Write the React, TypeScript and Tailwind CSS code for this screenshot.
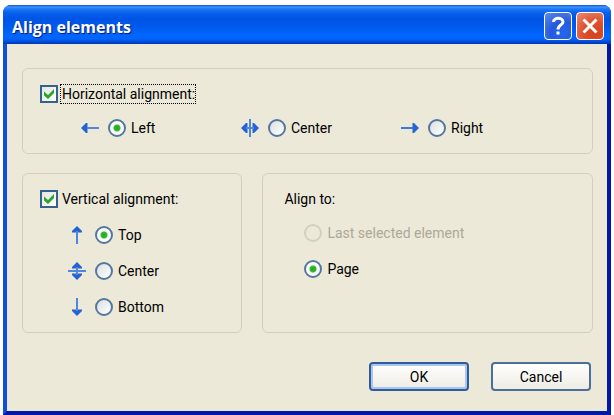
import type { ReactNode } from 'react';

type IconProps = {
  children: ReactNode;
};

const ArrowIcon = ({ children }: IconProps) => (
  <svg
    viewBox="0 0 18 18"
    className="size-[18px] shrink-0 fill-[#2463d4] stroke-none"
    aria-hidden="true"
  >
    {children}
  </svg>
);

const LeftIcon = () => (
  <ArrowIcon>
    <path d="M0 9 5 4 6.500 4 6.500 14 5 14Z" />
    <path d="M6 8h12v2H6z" fill="#4f86e0" />
  </ArrowIcon>
);

const RightIcon = () => (
  <ArrowIcon>
    <path d="M18 9 13 4 11.500 4 11.500 14 13 14Z" />
    <path d="M0 8h12v2H0z" fill="#3f78dc" />
  </ArrowIcon>
);

const HorizontalCenterIcon = () => (
  <ArrowIcon>
    <path d="M0 9 5 4 6.500 4 6.500 14 5 14ZM18 9 13 4 11.500 4 11.500 14 13 14Z" />
    <path d="M5 8h8v2H5zM8 0h2v18H8z" fill="#4f86e0" />
  </ArrowIcon>
);

const TopIcon = () => (
  <ArrowIcon>
    <path d="M9 0 14 5 14 6.500 4 6.500 4 5Z" />
    <path d="M8 5h2v13H8z" fill="#4f86e0" />
  </ArrowIcon>
);

const BottomIcon = () => (
  <ArrowIcon>
    <path d="M9 18 14 13 14 11.500 4 11.500 4 13Z" />
    <path d="M8 0h2v13H8z" fill="#4f86e0" />
  </ArrowIcon>
);

const VerticalCenterIcon = () => (
  <ArrowIcon>
    <path d="M9 0 14 5 14 6.500 4 6.500 4 5ZM9 18 14 13 14 11.500 4 11.500 4 13Z" />
    <path d="M8 5h2v8H8zM0 8h18v2H0z" fill="#4f86e0" />
  </ArrowIcon>
);

type RadioProps = {
  name: string;
  label: string;
  icon?: ReactNode;
  defaultChecked?: boolean;
  disabled?: boolean;
};

const Radio = ({ name, label, icon, defaultChecked, disabled }: RadioProps) => (
  <label className="flex h-[18px] items-center gap-[5px] whitespace-nowrap has-disabled:text-[#aca899]">
    {icon && <span className="mr-1">{icon}</span>}
    <input
      type="radio"
      name={name}
      defaultChecked={defaultChecked}
      disabled={disabled}
      className="size-[18px] shrink-0 appearance-none rounded-full border-2 border-[#54779f] bg-linear-to-br from-[#dcdfe2] to-white checked:bg-[radial-gradient(circle,#22a51f_0,#38b934_3px,#f4f6f4_4px,#ffffff_7px)] disabled:border-[#d3d0c1] disabled:bg-[#ece9d8] disabled:bg-none"
    />
    {label}
  </label>
);

type CheckboxProps = {
  label: string;
  focused?: boolean;
};

const Checkbox = ({ label, focused }: CheckboxProps) => (
  <label className="flex h-[18px] items-center gap-0.5 whitespace-nowrap">
    <span className="grid size-[18px] shrink-0">
      <input
        type="checkbox"
        defaultChecked
        className="peer size-[18px] appearance-none border-2 border-[#35618e] bg-linear-to-br from-[#e4e6e3] to-white [grid-area:1/1]"
      />
      <svg
        viewBox="0 0 18 18"
        className="pointer-events-none invisible size-[18px] fill-[#2ba52b] [grid-area:1/1] peer-checked:visible"
        aria-hidden="true"
      >
        <path d="M4 6.500 8 10 14 4V8L8 14 4 10.500Z" />
      </svg>
    </span>
    <span
      className={
        focused
          ? 'border border-dotted border-black pl-px leading-[18px]'
          : 'border border-transparent pl-px leading-[18px]'
      }
    >
      {label}
    </span>
  </label>
);

const groupClass = 'min-w-0 rounded-md border border-[#d0d0bf] px-[17px] py-4';

const App = () => {
  return (
    <main className="bg-white px-[3px] pt-[5px] pb-px font-['Roboto','Liberation_Sans',sans-serif] text-[14px] leading-[18px] text-black">
      <div
        role="dialog"
        aria-labelledby="dialog-title"
        className="overflow-hidden rounded-t-lg bg-[#0a3fdc]"
      >
        <header className="flex h-[39px] items-center justify-between bg-[linear-gradient(180deg,#0a52d8_0,#3d95ff_2px,#2079f8_4px,#0560ec_8px,#0054e3_14px,#0059ec_21px,#0066ff_30px,#0064fb_34px,#0048d0_37px,#0035b4_39px)] pr-[7px] pl-[9px]">
          <h1
            id="dialog-title"
            className="mt-1 font-['Open_Sans','Noto_Sans',sans-serif] text-[16px] leading-6 font-bold text-white [text-shadow:1px_1px_1px_#0a1883]"
          >
            Align elements
          </h1>
          <div className="mt-0.5 flex gap-1">
            <button
              type="button"
              aria-label="Help"
              className="flex size-7 items-center justify-center rounded border border-white bg-[radial-gradient(circle_at_70%_80%,#2468f0_0,#2559dd_45%,#5f8cec_100%)]"
            >
              <svg viewBox="0 0 26 26" className="size-[26px]" aria-hidden="true">
                <path
                  d="M8.500 9C8.500 4 18 4 18 9C18 12 13 12 13 16.500"
                  fill="none"
                  stroke="#fff"
                  strokeWidth="3"
                />
                <path d="M11.500 18.500h3v3h-3z" fill="#fff" />
              </svg>
            </button>
            <button
              type="button"
              aria-label="Close"
              className="flex size-7 items-center justify-center rounded border border-white bg-[radial-gradient(circle_at_70%_80%,#d84115_0,#dc5030_45%,#ee8b72_100%)]"
            >
              <svg viewBox="0 0 26 26" className="size-[26px]" aria-hidden="true">
                <path
                  d="M6.500 6.500 19.500 19.500M19.500 6.500 6.500 19.500"
                  fill="none"
                  stroke="#fff"
                  strokeWidth="3"
                />
              </svg>
            </button>
          </div>
        </header>

        <div className="border-x-4 border-b-4 border-l-[#0f4fe0] border-r-[#0019a8] border-b-[#0019a8]">
          <form
            className="bg-[#ece9d8] pt-6 pr-3.5 pb-5 pl-[15px]"
            onSubmit={(e) => e.preventDefault()}
          >
            <fieldset className={groupClass} aria-label="Horizontal alignment">
              <Checkbox label="Horizontal alignment:" focused />
              <div className="mt-4 flex pl-[41px]">
                <div className="w-40">
                  <Radio name="horizontal" label="Left" icon={<LeftIcon />} defaultChecked />
                </div>
                <div className="w-40">
                  <Radio name="horizontal" label="Center" icon={<HorizontalCenterIcon />} />
                </div>
                <Radio name="horizontal" label="Right" icon={<RightIcon />} />
              </div>
            </fieldset>

            <div className="mt-[19px] grid grid-cols-[2fr_3fr] gap-5">
              <fieldset className={groupClass} aria-label="Vertical alignment">
                <Checkbox label="Vertical alignment:" />
                <div className="mt-[18px] flex flex-col gap-[18px] pl-7">
                  <Radio name="vertical" label="Top" icon={<TopIcon />} defaultChecked />
                  <Radio name="vertical" label="Center" icon={<VerticalCenterIcon />} />
                  <Radio name="vertical" label="Bottom" icon={<BottomIcon />} />
                </div>
              </fieldset>

              <fieldset className={groupClass} aria-labelledby="align-to">
                <p id="align-to" className="pl-1">
                  Align to:
                </p>
                <div className="mt-4 flex flex-col gap-[18px] pl-6">
                  <Radio name="target" label="Last selected element" disabled />
                  <Radio name="target" label="Page" defaultChecked />
                </div>
              </fieldset>
            </div>

            <div className="mt-[29px] flex justify-end gap-[22px] pr-0.5">
              <button
                type="submit"
                className="h-[29px] w-[100px] rounded border-2 border-[#315c99] bg-linear-to-b from-white to-[#eeece3] inset-ring-2 inset-ring-[#a8c6f0]"
              >
                OK
              </button>
              <button
                type="button"
                className="h-[29px] w-[100px] rounded border-2 border-[#4a6f98] bg-linear-to-b from-white to-[#eeece3]"
              >
                Cancel
              </button>
            </div>
          </form>
        </div>
      </div>
    </main>
  );
};

export default App;
